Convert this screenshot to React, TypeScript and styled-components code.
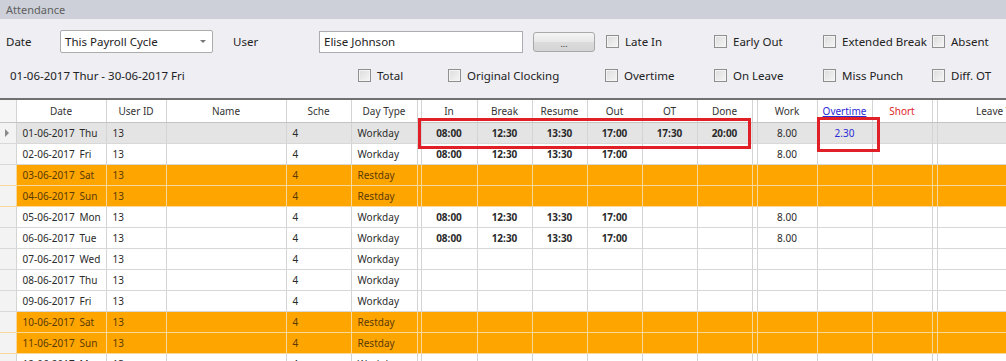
import React from "react";
import styled, { createGlobalStyle, css } from "styled-components";

const GlobalStyle = createGlobalStyle`
  html, body {
    margin: 0;
    padding: 0;
    background: #eeeef3;
  }
  * {
    box-sizing: border-box;
  }
`;

const Window = styled.div`
  width: 1006px;
  height: 361px;
  overflow: hidden;
  background: #eeeef3;
  font-family: "Noto Sans", "Open Sans", sans-serif;
  color: #222;
`;

const TitleBar = styled.div`
  height: 19px;
  background: #cdd0d9;
  color: #606060;
  font-size: 11px;
  line-height: 19px;
  padding-left: 6px;
`;

const FilterPanel = styled.div`
  height: 79px;
  padding-top: 11px;
  display: flex;
  flex-direction: column;
  gap: 11px;
`;

const FilterRow = styled.div`
  height: 23px;
  display: flex;
  align-items: center;
  font-size: 11.5px;
`;

const Label = styled.div<{ $w: number; $pad?: number }>`
  width: ${(p) => p.$w}px;
  padding-left: ${(p) => p.$pad ?? 0}px;
  flex-shrink: 0;
`;

const Combo = styled.div`
  width: 153px;
  height: 23px;
  background: #fff;
  border: 1px solid #acacac;
  border-radius: 2px;
  display: flex;
  align-items: center;
  justify-content: space-between;
  padding: 0 6px 0 4px;
  margin-right: 20px;
`;

const ComboArrow = styled.span`
  width: 0;
  height: 0;
  border-left: 3px solid transparent;
  border-right: 3px solid transparent;
  border-top: 3px solid #777;
`;

const TextBox = styled.div`
  width: 204px;
  height: 22px;
  background: #fff;
  border: 1px solid #abadb3;
  display: flex;
  align-items: center;
  padding-left: 4px;
  margin-right: 10px;
`;

const DotsButton = styled.div`
  width: 62px;
  height: 20px;
  border: 1px solid #a8a8a8;
  border-radius: 3px;
  background: linear-gradient(#f4f4f4, #e8e8e8 50%, #dcdcdc 51%, #d4d4d4);
  display: flex;
  align-items: flex-end;
  justify-content: center;
  font-size: 9px;
  line-height: 15px;
  color: #333;
  margin-right: 11px;
`;

const CheckCell = styled.label<{ $w: number }>`
  width: ${(p) => p.$w}px;
  flex-shrink: 0;
  display: flex;
  align-items: center;
  gap: 6px;
  white-space: nowrap;
`;

const Box = styled.span`
  width: 13px;
  height: 13px;
  border: 1px solid #8e8f8f;
  background: linear-gradient(135deg, #dcdcdc, #f6f6f6);
  box-shadow: inset 0 0 0 1px #f4f4f4;
  flex-shrink: 0;
`;

const Grid = styled.div`
  position: relative;
  border-top: 2px solid #707070;
  background: #fff;
  height: 264px;
  overflow: hidden;
`;

const Table = styled.table`
  border-collapse: collapse;
  table-layout: fixed;
  width: 1067px;
  font-size: 10px;
`;

const HeadCell = styled.th<{ $tone?: "blue" | "red" }>`
  height: 22px;
  padding: 0;
  font-weight: normal;
  text-align: center;
  color: #333;
  background: #fff;
  border-right: 1px solid #d4d4d4;
  border-bottom: 1px solid #c4c4c4;
  white-space: nowrap;
  overflow: hidden;
  ${(p) =>
    p.$tone === "blue" &&
    css`
      color: #2b2bd6;
      text-decoration: underline;
    `}
  ${(p) => p.$tone === "red" && "color: #e0262b;"}
`;

type Kind = "work" | "rest" | "selected";

const Row = styled.tr<{ $kind: Kind }>`
  height: 21px;
  background: ${(p) =>
    p.$kind === "rest" ? "#fea500" : p.$kind === "selected" ? "#e4e4e4" : "#fff"};
  color: ${(p) => (p.$kind === "rest" ? "#5a3a05" : "#2a2a2a")};
  & > td {
    border-right: 1px solid ${(p) => (p.$kind === "rest" ? "#f7d79a" : "#d4d4d4")};
    border-bottom: 1px solid ${(p) => (p.$kind === "rest" ? "#f7d79a" : "#d8d8d8")};
  }
`;

const Cell = styled.td<{ $align?: "center" | "left"; $bold?: boolean; $blue?: boolean }>`
  padding: 0 0 0 ${(p) => (p.$align === "center" ? 0 : 6)}px;
  text-align: ${(p) => p.$align ?? "left"};
  font-weight: ${(p) => (p.$bold ? 700 : 400)};
  color: ${(p) => (p.$blue ? "#2b2bd6" : "inherit")};
  white-space: nowrap;
  overflow: hidden;
`;

const IndicatorCell = styled.td`
  padding: 0 0 0 5px;
  background: #f3f3f3;
`;

const IndicatorHead = styled.th`
  padding: 0;
  background: #f6f6f6;
  border-right: 1px solid #d4d4d4;
  border-bottom: 1px solid #c4c4c4;
`;

const Arrow = styled.span`
  display: block;
  width: 0;
  height: 0;
  border-top: 4px solid transparent;
  border-bottom: 4px solid transparent;
  border-left: 4px solid #8a8a8a;
`;

const DateText = styled.span`
  display: inline-block;
  width: 57px;
`;

const Highlight = styled.div<{ $l: number; $t: number; $w: number; $h: number }>`
  position: absolute;
  left: ${(p) => p.$l}px;
  top: ${(p) => p.$t}px;
  width: ${(p) => p.$w}px;
  height: ${(p) => p.$h}px;
  border: 3px solid #e01f26;
  pointer-events: none;
`;

const widths = [16, 90, 60, 120, 65, 66, 4, 56, 55, 55, 55, 55, 55, 5, 60, 55, 60, 5, 130];

type Day = {
  date: string;
  day: string;
  kind: Kind;
  times?: string[];
  work?: string;
  ot?: string;
};

const days: Day[] = [
  { date: "01-06-2017", day: "Thu", kind: "selected", times: ["08:00", "12:30", "13:30", "17:00", "17:30", "20:00"], work: "8.00", ot: "2.30" },
  { date: "02-06-2017", day: "Fri", kind: "work", times: ["08:00", "12:30", "13:30", "17:00"], work: "8.00" },
  { date: "03-06-2017", day: "Sat", kind: "rest" },
  { date: "04-06-2017", day: "Sun", kind: "rest" },
  { date: "05-06-2017", day: "Mon", kind: "work", times: ["08:00", "12:30", "13:30", "17:00"], work: "8.00" },
  { date: "06-06-2017", day: "Tue", kind: "work", times: ["08:00", "12:30", "13:30", "17:00"], work: "8.00" },
  { date: "07-06-2017", day: "Wed", kind: "work" },
  { date: "08-06-2017", day: "Thu", kind: "work" },
  { date: "09-06-2017", day: "Fri", kind: "work" },
  { date: "10-06-2017", day: "Sat", kind: "rest" },
  { date: "11-06-2017", day: "Sun", kind: "rest" },
  { date: "12-06-2017", day: "Mon", kind: "work" },
];

const Check = ({ w, label }: { w: number; label: string }) => (
  <CheckCell $w={w}>
    <Box />
    {label}
  </CheckCell>
);

export default function App() {
  return (
    <>
      <GlobalStyle />
      <Window>
        <TitleBar>Attendance</TitleBar>
        <FilterPanel>
          <FilterRow>
            <Label $w={60} $pad={6}>Date</Label>
            <Combo>
              This Payroll Cycle
              <ComboArrow />
            </Combo>
            <Label $w={86}>User</Label>
            <TextBox>Elise Johnson</TextBox>
            <DotsButton>...</DotsButton>
            <Check w={108} label="Late In" />
            <Check w={109} label="Early Out" />
            <Check w={109} label="Extended Break" />
            <Check w={74} label="Absent" />
          </FilterRow>
          <FilterRow>
            <Label $w={358} $pad={10}>01-06-2017 Thur - 30-06-2017 Fri</Label>
            <Check w={90} label="Total" />
            <Check w={157} label="Original Clocking" />
            <Check w={109} label="Overtime" />
            <Check w={109} label="On Leave" />
            <Check w={109} label="Miss Punch" />
            <Check w={74} label="Diff. OT" />
          </FilterRow>
        </FilterPanel>
        <Grid>
          <Table>
            <colgroup>
              {widths.map((w, i) => (
                <col key={i} style={{ width: w }} />
              ))}
            </colgroup>
            <thead>
              <tr>
                <IndicatorHead />
                <HeadCell>Date</HeadCell>
                <HeadCell>User ID</HeadCell>
                <HeadCell>Name</HeadCell>
                <HeadCell>Sche</HeadCell>
                <HeadCell>Day Type</HeadCell>
                <HeadCell />
                <HeadCell>In</HeadCell>
                <HeadCell>Break</HeadCell>
                <HeadCell>Resume</HeadCell>
                <HeadCell>Out</HeadCell>
                <HeadCell>OT</HeadCell>
                <HeadCell>Done</HeadCell>
                <HeadCell />
                <HeadCell>Work</HeadCell>
                <HeadCell $tone="blue">Overtime</HeadCell>
                <HeadCell $tone="red">Short</HeadCell>
                <HeadCell />
                <HeadCell>Leave Type</HeadCell>
              </tr>
            </thead>
            <tbody>
              {days.map((d) => (
                <Row key={d.date} $kind={d.kind}>
                  <IndicatorCell>{d.kind === "selected" && <Arrow />}</IndicatorCell>
                  <Cell>
                    <DateText>{d.date}</DateText>
                    {d.day}
                  </Cell>
                  <Cell>13</Cell>
                  <Cell />
                  <Cell>4</Cell>
                  <Cell>{d.kind === "rest" ? "Restday" : "Workday"}</Cell>
                  <Cell />
                  {Array.from({ length: 6 }).map((_, i) => (
                    <Cell key={i} $align="center" $bold>
                      {d.times?.[i] ?? ""}
                    </Cell>
                  ))}
                  <Cell />
                  <Cell $align="center">{d.work ?? ""}</Cell>
                  <Cell $align="center" $blue>{d.ot ?? ""}</Cell>
                  <Cell />
                  <Cell />
                  <Cell />
                </Row>
              ))}
            </tbody>
          </Table>
          <Highlight $l={418} $t={18} $w={333} $h={31} />
          <Highlight $l={817} $t={17} $w={63} $h={35} />
        </Grid>
      </Window>
    </>
  );
}
